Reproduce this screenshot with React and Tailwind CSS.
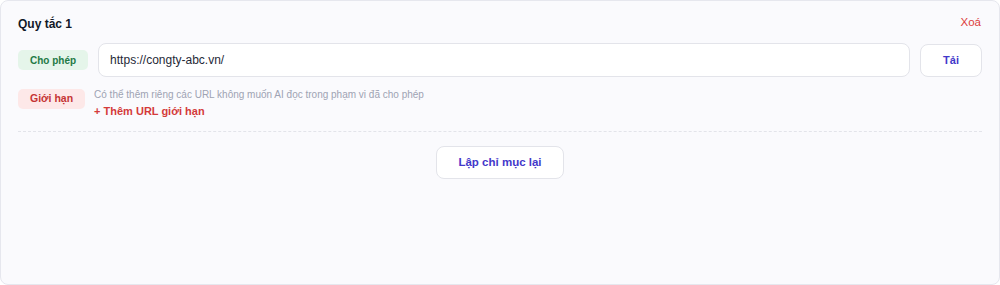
export default function App() {
  return (
    <div className="w-[1000px] h-[285px] bg-white" style={{ fontFamily: '"Liberation Sans", Arial, sans-serif' }}>
      <div className="h-[285px] rounded-[8px] border border-[#e6e7ee] bg-[#fafafd] px-[17px] pt-[13px]">
        <div className="flex items-center justify-between h-[20px]">
          <div className="text-[12px] font-bold text-[#111827]">Quy tắc 1</div>
          <button className="text-[11.5px] text-[#dc3c3c] pr-[1px] -mt-[2px]">Xoá</button>
        </div>
        <div className="mt-[9px] flex items-center gap-[10px]">
          <span className="h-[20px] rounded-[5px] bg-[#e5f5ea] px-[12px] flex items-center text-[10px] font-bold text-[#237a45]">Cho phép</span>
          <div className="flex-1 h-[34px] rounded-[8px] border border-[#e3e4ea] bg-white flex items-center px-[11px] text-[12px] text-[#1f2937]">https://congty-abc.vn/</div>
          <button className="w-[62px] h-[33px] rounded-[8px] border border-[#e3e4ea] bg-white text-[11px] font-bold text-[#4338ca]">Tải</button>
        </div>
        <div className="mt-[12px] flex items-start gap-[9px]">
          <span className="h-[20px] rounded-[5px] bg-[#fde8e8] px-[12px] flex items-center text-[10.5px] font-bold text-[#c53434]">Giới hạn</span>
          <div>
            <div className="text-[10px] leading-[12px] text-[#9ea3b3]">Có thể thêm riêng các URL không muốn AI đọc trong phạm vi đã cho phép</div>
            <button className="mt-[4px] block text-[11px] leading-[13px] font-bold text-[#d43a3a]">+ Thêm URL giới hạn</button>
          </div>
        </div>
        <div className="mt-[13px] border-t border-dashed border-[#e3e4ea]"></div>
        <div className="mt-[14px] flex justify-center">
          <button className="w-[128px] h-[33px] rounded-[8px] border border-[#e3e4ea] bg-white text-[11.5px] font-bold text-[#4338ca]">Lập chỉ mục lại</button>
        </div>
      </div>
    </div>
  );
}
